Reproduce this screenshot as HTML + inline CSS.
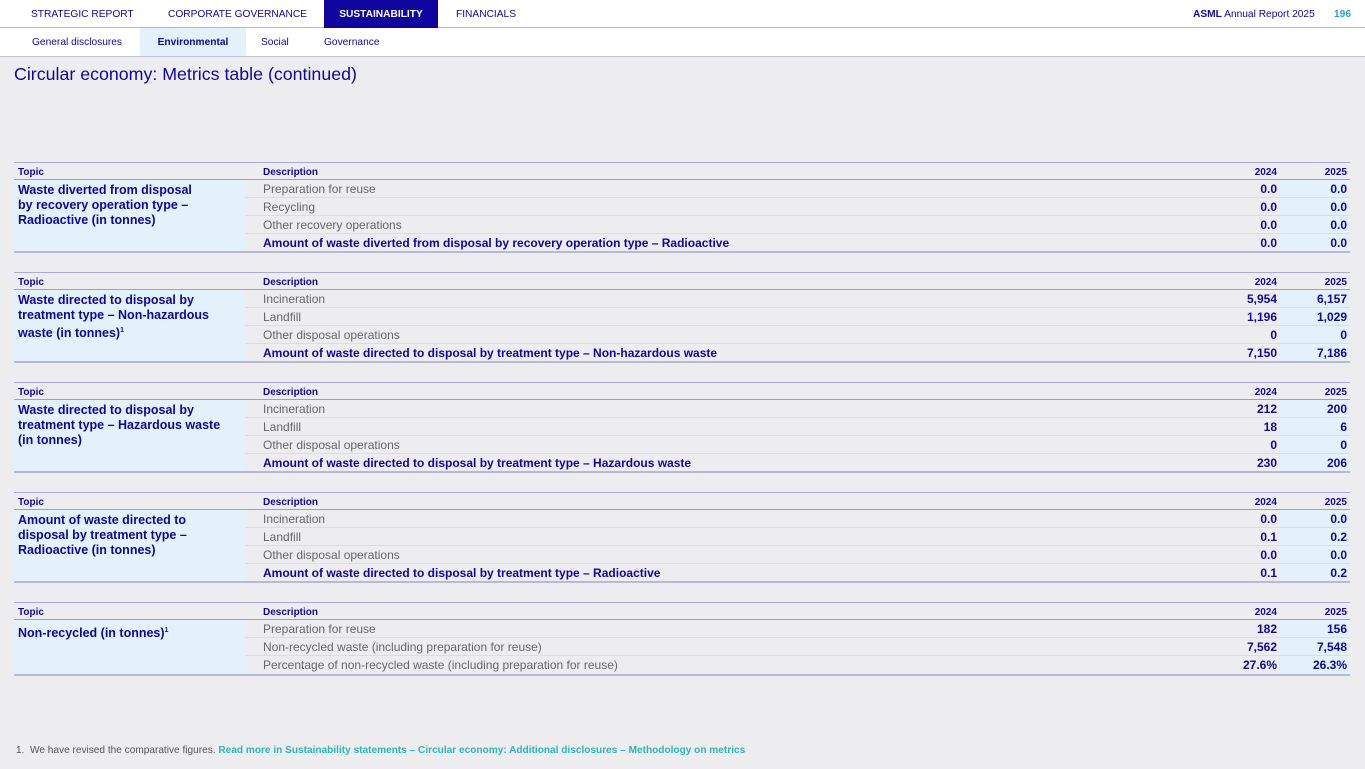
<!DOCTYPE html>
<html><head><meta charset="utf-8"><style>
*{margin:0;padding:0;box-sizing:border-box}
body{width:1365px;height:769px;background:#ededf0;font-family:"Liberation Sans",Arial,sans-serif;position:relative;overflow:hidden;color:#10069f}
.top{position:absolute;left:0;top:0;width:1365px;height:28px;background:#fff;border-bottom:1px solid #b4b4cc}
.top span{position:absolute;top:0;height:28px;line-height:30px;font-size:10.2px;color:#10069f}
.sub{position:absolute;left:0;top:28px;width:1365px;height:29px;background:#fff;border-bottom:1px solid #c4c4d6}
.sub span{position:absolute;top:0;height:28px;line-height:29px;font-size:10.2px;color:#10069f}
h1{position:absolute;left:14px;top:64px;font-size:17.8px;font-weight:normal;color:#10069f}
.t{position:absolute;left:14px;width:1336px;height:91px}
.t .hl{position:absolute;left:0;top:0;width:1336px;height:1px;background:#aaa8dc}
.t .hd{position:absolute;top:1px;height:17px;line-height:19px;font-size:10px;font-weight:bold}
.t .hr{text-align:right;width:60px}
.t .hl2{position:absolute;left:0;top:17px;width:1336px;height:1px;background:#9d9bd2}
.topic{position:absolute;left:0;top:18px;width:231px;height:72px;background:#e3f1fb;padding:3px 4px;font-size:12.5px;font-weight:bold;line-height:15px}
.c25{position:absolute;left:1266px;top:18px;width:70px;height:72px;background:#e3f1fb}
.r{position:absolute;left:231px;width:1105px;height:18px;border-bottom:1px solid #dcdce6;font-size:12px;line-height:19px}
.r .d{position:absolute;left:18px;color:#666}
.r.b .d{color:#10069f;font-weight:bold}
.r .a,.r .c{position:absolute;font-weight:bold;text-align:right;width:80px}
.r .a{left:952px}
.r .c{left:1022px}
.bl{position:absolute;left:0;top:89px;width:1336px;height:2px;background:#b9b8d8}
sup{font-size:7px;vertical-align:5px}
.foot{position:absolute;left:16px;top:745px;font-size:10.1px;color:#555}
.foot b{color:#2ab7b7}
</style></head><body>
<div class="top">
<span style="left:31px">STRATEGIC REPORT</span>
<span style="left:168px">CORPORATE GOVERNANCE</span>
<span style="left:324px;width:114px;background:#10069f;color:#fff;font-weight:bold;text-align:center">SUSTAINABILITY</span>
<span style="left:456px">FINANCIALS</span>
<span style="left:1193px"><b>ASML</b> Annual Report 2025</span>
<span style="left:1334px;color:#2a9fd6;font-weight:bold">196</span>
</div>
<div class="sub">
<span style="left:32px">General disclosures</span>
<span style="left:140px;width:106px;background:#e3f1fb;font-weight:bold;text-align:center">Environmental</span>
<span style="left:261px">Social</span>
<span style="left:324px">Governance</span>
</div>
<h1>Circular economy: Metrics table (continued)</h1>

<div class="t" style="top:162px">
<div class="hl"></div><div class="hd" style="left:4px">Topic</div><div class="hd" style="left:249px">Description</div><div class="hd hr" style="left:1203px">2024</div><div class="hd hr" style="left:1273px">2025</div><div class="hl2"></div>
<div class="topic">Waste diverted from disposal<br>by recovery operation type –<br>Radioactive (in tonnes)</div><div class="c25"></div>
<div class="r" style="top:18px"><span class="d">Preparation for reuse</span><span class="a">0.0</span><span class="c">0.0</span></div>
<div class="r" style="top:36px"><span class="d">Recycling</span><span class="a">0.0</span><span class="c">0.0</span></div>
<div class="r" style="top:54px"><span class="d">Other recovery operations</span><span class="a">0.0</span><span class="c">0.0</span></div>
<div class="r b" style="top:72px;border:0"><span class="d">Amount of waste diverted from disposal by recovery operation type – Radioactive</span><span class="a">0.0</span><span class="c">0.0</span></div>
<div class="bl"></div></div>

<div class="t" style="top:272px">
<div class="hl"></div><div class="hd" style="left:4px">Topic</div><div class="hd" style="left:249px">Description</div><div class="hd hr" style="left:1203px">2024</div><div class="hd hr" style="left:1273px">2025</div><div class="hl2"></div>
<div class="topic">Waste directed to disposal by<br>treatment type – Non-hazardous<br>waste (in tonnes)<sup>1</sup></div><div class="c25"></div>
<div class="r" style="top:18px"><span class="d">Incineration</span><span class="a">5,954</span><span class="c">6,157</span></div>
<div class="r" style="top:36px"><span class="d">Landfill</span><span class="a">1,196</span><span class="c">1,029</span></div>
<div class="r" style="top:54px"><span class="d">Other disposal operations</span><span class="a">0</span><span class="c">0</span></div>
<div class="r b" style="top:72px;border:0"><span class="d">Amount of waste directed to disposal by treatment type – Non-hazardous waste</span><span class="a">7,150</span><span class="c">7,186</span></div>
<div class="bl"></div></div>

<div class="t" style="top:382px">
<div class="hl"></div><div class="hd" style="left:4px">Topic</div><div class="hd" style="left:249px">Description</div><div class="hd hr" style="left:1203px">2024</div><div class="hd hr" style="left:1273px">2025</div><div class="hl2"></div>
<div class="topic">Waste directed to disposal by<br>treatment type – Hazardous waste<br>(in tonnes)</div><div class="c25"></div>
<div class="r" style="top:18px"><span class="d">Incineration</span><span class="a">212</span><span class="c">200</span></div>
<div class="r" style="top:36px"><span class="d">Landfill</span><span class="a">18</span><span class="c">6</span></div>
<div class="r" style="top:54px"><span class="d">Other disposal operations</span><span class="a">0</span><span class="c">0</span></div>
<div class="r b" style="top:72px;border:0"><span class="d">Amount of waste directed to disposal by treatment type – Hazardous waste</span><span class="a">230</span><span class="c">206</span></div>
<div class="bl"></div></div>

<div class="t" style="top:492px">
<div class="hl"></div><div class="hd" style="left:4px">Topic</div><div class="hd" style="left:249px">Description</div><div class="hd hr" style="left:1203px">2024</div><div class="hd hr" style="left:1273px">2025</div><div class="hl2"></div>
<div class="topic">Amount of waste directed to<br>disposal by treatment type –<br>Radioactive (in tonnes)</div><div class="c25"></div>
<div class="r" style="top:18px"><span class="d">Incineration</span><span class="a">0.0</span><span class="c">0.0</span></div>
<div class="r" style="top:36px"><span class="d">Landfill</span><span class="a">0.1</span><span class="c">0.2</span></div>
<div class="r" style="top:54px"><span class="d">Other disposal operations</span><span class="a">0.0</span><span class="c">0.0</span></div>
<div class="r b" style="top:72px;border:0"><span class="d">Amount of waste directed to disposal by treatment type – Radioactive</span><span class="a">0.1</span><span class="c">0.2</span></div>
<div class="bl"></div></div>

<div class="t" style="top:602px;height:74px">
<div class="hl"></div><div class="hd" style="left:4px">Topic</div><div class="hd" style="left:249px">Description</div><div class="hd hr" style="left:1203px">2024</div><div class="hd hr" style="left:1273px">2025</div><div class="hl2"></div>
<div class="topic" style="height:54px">Non-recycled (in tonnes)<sup>1</sup></div><div class="c25" style="height:54px"></div>
<div class="r" style="top:18px"><span class="d">Preparation for reuse</span><span class="a">182</span><span class="c">156</span></div>
<div class="r" style="top:36px"><span class="d">Non-recycled waste (including preparation for reuse)</span><span class="a">7,562</span><span class="c">7,548</span></div>
<div class="r" style="top:54px;border:0"><span class="d">Percentage of non-recycled waste (including preparation for reuse)</span><span class="a">27.6%</span><span class="c">26.3%</span></div>
<div class="bl" style="top:72px"></div></div>

<div class="foot">1.&nbsp; We have revised the comparative figures. <b>Read more in Sustainability statements – Circular economy: Additional disclosures – Methodology on metrics</b></div>
</body></html>
